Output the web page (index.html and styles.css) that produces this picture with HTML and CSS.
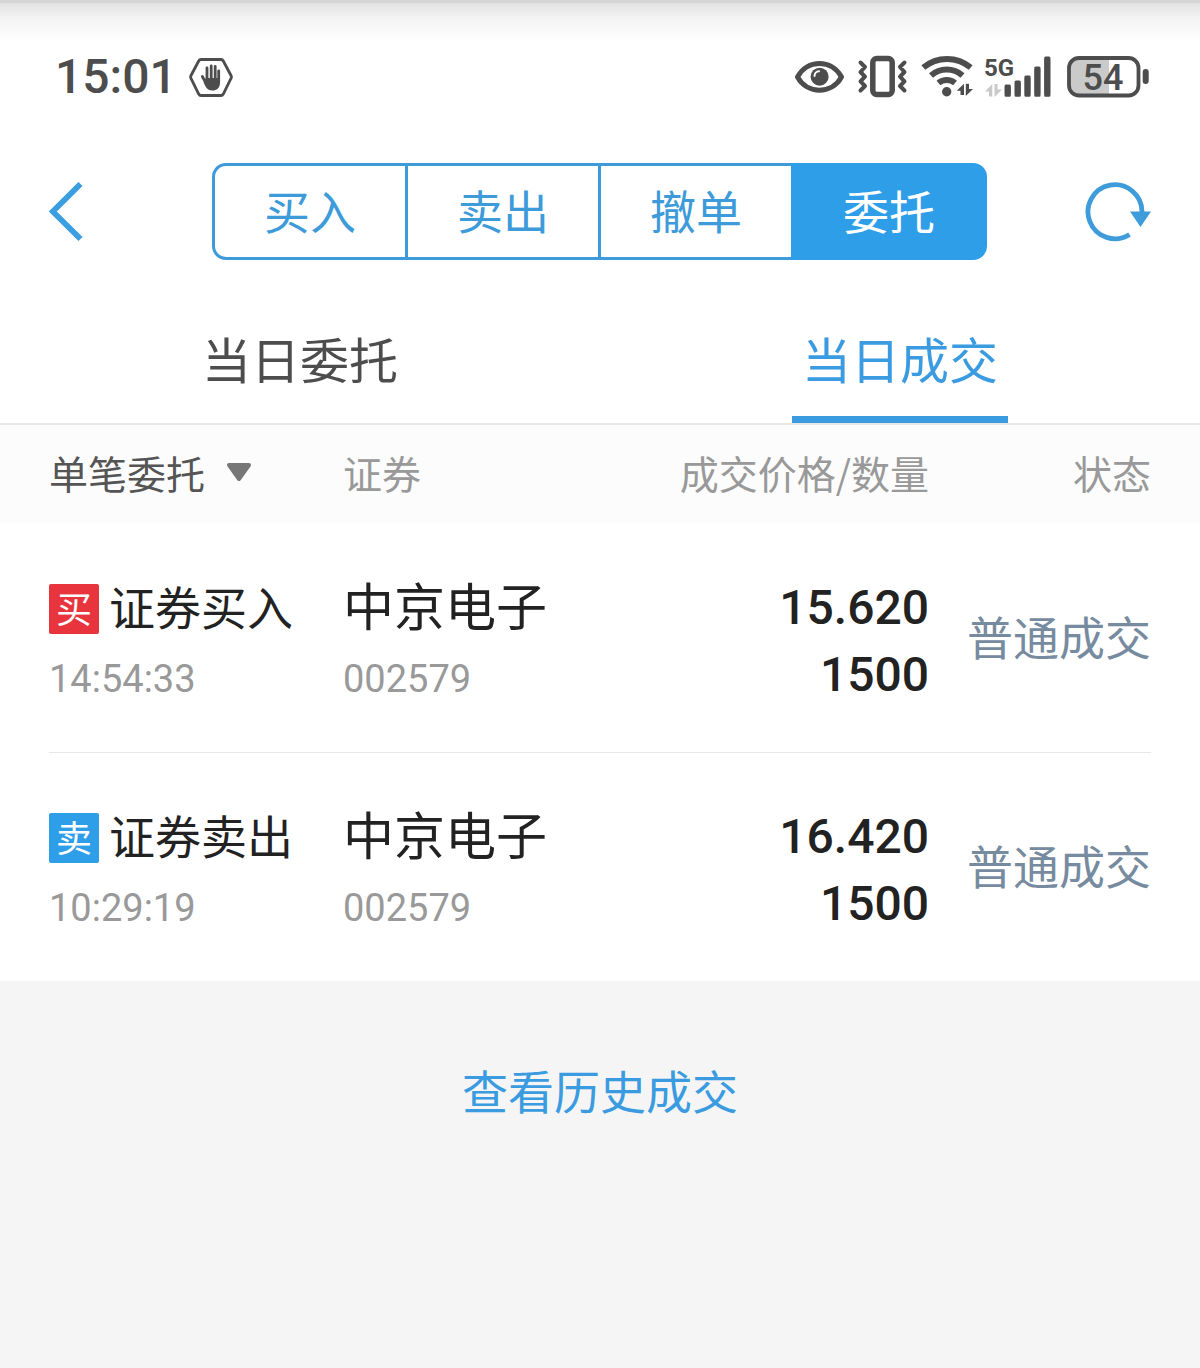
FILE: index.html
```html
<!DOCTYPE html>
<html lang="zh-CN">
<head>
    <meta charset="UTF-8">
    <meta name="viewport" content="width=device-width, initial-scale=1.0">
    <title>当日成交</title>
    <link rel="stylesheet" href="styles.css">
</head>
<body>
    <!-- 状态栏 -->
    <div class="status-bar">
        <div class="status-left">
            <span class="clock">15:01</span>
            <svg width="44" height="44" viewBox="0 0 44 44">
                <path d="M12 4.500H32Q33.500 4.500 34.300 6L42 20.500Q42.800 22 42 23.500L34.300 39Q33.500 40.500 32 40.500H12Q10.500 40.500 9.700 39L2 23.500Q1.200 22 2 20.500L9.700 6Q10.500 4.500 12 4.500Z" fill="none" stroke="#4d4d4d" stroke-width="2.800"/>
                <path d="M18 13V25M22.200 11V25M26.200 11.500V25M29.700 16V27M13.300 21.500L17 28" fill="none" stroke="#4d4d4d" stroke-width="2.800" stroke-linecap="round"/>
                <path d="M16.700 23H31V28C31 33 27.500 35.500 23.500 35.500C18.500 35.500 16.500 32 14.500 27L16.700 27Z" fill="#4d4d4d"/>
            </svg>
        </div>
        <div class="status-right">
            <svg width="50" height="44" viewBox="0 0 50 44">
                <path d="M2.500 22C12 4 37 4 46.500 22C37 39.500 12 39.500 2.500 22Z" fill="none" stroke="#4d4d4d" stroke-width="5" stroke-linejoin="round"/>
                <circle cx="24.600" cy="21.700" r="9" fill="#4d4d4d"/>
                <path d="M19.500 21C19.500 18.500 21.500 16.500 24 16.300" fill="none" stroke="#fff" stroke-width="2" stroke-linecap="round"/>
            </svg>
            <svg width="52" height="44" viewBox="0 0 52 44">
                <rect x="15.800" y="3.500" width="19.400" height="36" rx="4" fill="none" stroke="#4d4d4d" stroke-width="5.500"/>
                <path d="M3.500 7.500L8 12L3.500 17L8 21.700L3.500 26.400L8 31L3.500 35.500M47.500 7.500L43 12L47.500 17L43 21.700L47.500 26.400L43 31L47.500 35.500" fill="none" stroke="#4d4d4d" stroke-width="4" stroke-linecap="round" stroke-linejoin="round"/>
            </svg>
            <svg width="52" height="44" viewBox="0 0 52 44">
                <path d="M2.300 12.500A37 37 0 0 1 49.700 12.500M10 20.500A24 24 0 0 1 41.500 20.500M17.500 28A13 13 0 0 1 34 28" fill="none" stroke="#4d4d4d" stroke-width="6"/>
                <circle cx="25.700" cy="36.800" r="4.700" fill="#4d4d4d"/>
                <path d="M43 28.700V40H39.500V35.800H35.700ZM44.800 41V28.700H48V34H52Z" fill="#4d4d4d"/>
            </svg>
            <svg width="70" height="44" viewBox="0 0 70 44">
                <text class="net-label" x="-1" y="21">5G</text>
                <path d="M7.300 29V41.500H4V36.500H0ZM9.500 42V29H12.500V34.500H17Z" fill="#c9c9c9"/>
                <path d="M22.700 32V39.500M32.700 28V39.500M42.500 23V39.500M52.400 14V39.500M62.300 4V39.500" stroke="#4d4d4d" stroke-width="6.400" stroke-linecap="butt"/>
                <path d="M21 31H24.400M31 27H34.400M40.800 22H44.200M50.700 13H54.100M60.600 3H64M21 40.300H24.400M31 40.300H34.400M40.800 40.300H44.200M50.700 40.300H54.100M60.600 40.300H64" stroke="#4d4d4d" stroke-width="3" stroke-linecap="round"/>
            </svg>
            <svg width="83" height="44" viewBox="0 0 83 44">
                <path d="M12 3H42V40H12Q2 40 2 30V13Q2 3 12 3Z" fill="#cacaca"/>
                <rect x="2" y="3" width="69.500" height="37.500" rx="10" fill="none" stroke="#4d4d4d" stroke-width="3.800"/>
                <rect x="75.700" y="14" width="6" height="15" rx="3" fill="#4d4d4d"/>
                <text class="battery-label" x="36" y="35" text-anchor="middle">54</text>
            </svg>
        </div>
    </div>

    <!-- 顶部导航 -->
    <div class="nav">
        <button class="icon-btn" aria-label="返回">
            <svg width="34" height="60" viewBox="0 0 34 60">
                <path d="M31.500 2L3.800 29.500L31.500 57" fill="none" stroke="#3a9ee0" stroke-width="5.800"/>
            </svg>
        </button>
        <div class="segment">
            <button>买入</button>
            <button>卖出</button>
            <button>撤单</button>
            <button class="active">委托</button>
        </div>
        <button class="icon-btn refresh" aria-label="刷新">
            <svg width="66" height="60" viewBox="0 0 66 60">
                <path d="M57 30A27 27 0 1 0 44.500 52.500" fill="none" stroke="#3f9cda" stroke-width="4.800"/>
                <path d="M45 29.500H66L55.500 45Z" fill="#3f9cda"/>
            </svg>
        </button>
    </div>

    <div class="tabs">
        <button>当日委托</button>
        <button class="active">当日成交</button>
    </div>

    <!-- 成交列表 -->
    <table class="deals">
        <thead>
            <tr>
                <th class="col-type">
                    <div class="filter">
                        <select aria-label="委托类型">
                            <option>单笔委托</option>
                        </select>
                        <svg width="26" height="20" viewBox="0 0 26 20">
                            <path d="M3 3H23L13 17Z" fill="#777" stroke="#777" stroke-width="4" stroke-linejoin="round"/>
                        </svg>
                    </div>
                </th>
                <th class="col-stock">证券</th>
                <th class="col-price">成交价格/数量</th>
                <th class="col-state">状态</th>
            </tr>
        </thead>
        <tbody>
            <tr>
                <td class="col-type">
                    <div class="type"><span class="badge buy">买</span>证券买入</div>
                    <div class="sub">14:54:33</div>
                </td>
                <td class="col-stock">
                    <div class="name">中京电子</div>
                    <div class="sub">002579</div>
                </td>
                <td class="col-price">
                    <div>15.620</div>
                    <div>1500</div>
                </td>
                <td class="col-state">普通成交</td>
            </tr>
            <tr>
                <td class="col-type">
                    <div class="type"><span class="badge sell">卖</span>证券卖出</div>
                    <div class="sub">10:29:19</div>
                </td>
                <td class="col-stock">
                    <div class="name">中京电子</div>
                    <div class="sub">002579</div>
                </td>
                <td class="col-price">
                    <div>16.420</div>
                    <div>1500</div>
                </td>
                <td class="col-state">普通成交</td>
            </tr>
        </tbody>
    </table>

    <div class="footer">
        <a href="#history">查看历史成交</a>
    </div>
</body>
</html>
```
FILE: styles.css
```css
* {
    margin: 0;
    padding: 0;
    box-sizing: border-box;
}
body {
    font-family: Roboto, 'Noto Sans CJK SC', sans-serif;
    display: flex;
    flex-direction: column;
    min-height: 100vh;
    background-color: #fff;
    color: #222;
}
svg {
    display: block;
    flex: none;
}
button, select {
    font-family: 'Noto Sans CJK SC', sans-serif;
    border: none;
    background: none;
    cursor: pointer;
}
.status-bar {
    display: flex;
    align-items: center;
    justify-content: space-between;
    padding: 42px 50px 30px 55px;
    color: #4d4d4d;
    /* 顶部阴影 */
    background: linear-gradient(#d5d5d5 3px, #e2e2e2 3px, #f3f3f3 18px, #fff 42px);
}
.status-left, .status-right {
    display: flex;
    align-items: center;
    gap: 12px;
}
.clock {
    font-size: 48px;
    font-weight: 500;
    line-height: 70px;
}
.net-label {
    font-size: 24px;
    font-weight: 700;
    fill: #4d4d4d;
}
.battery-label {
    font-size: 36px;
    font-weight: 500;
    fill: #4d4d4d;
}
.nav {
    display: grid;
    grid-template-columns: 163fr 775fr 164fr;
    align-items: center;
    padding: 21px 49px 0;
}
.icon-btn {
    justify-self: start;
}
.refresh {
    justify-self: end;
}
.segment {
    display: flex;
}
.segment button {
    flex: 1;
    height: 97px;
    padding-bottom: 5px;
    border: 3px solid #3d9bda;
    font-size: 46px;
    color: #3d9bda;
}
.segment button + button {
    margin-left: -3px;
}
.segment button:first-child {
    border-radius: 14px 0 0 14px;
}
.segment button:last-child {
    border-radius: 0 14px 14px 0;
}
.segment .active {
    background-color: #2f9ee9;
    border-color: #2f9ee9;
    color: #fff;
}
.tabs {
    display: flex;
    margin-top: 35px;
    border-bottom: 2px solid #e8e8e8;
}
.tabs button {
    flex: 1;
    height: 128px;
    padding-bottom: 4px;
    font-size: 49px;
    color: #4d4d4d;
    background: no-repeat center bottom / 36% 7px;
}
.tabs .active {
    color: #3a9be0;
    background-image: linear-gradient(#3a9be0, #3a9be0);
}
.deals {
    width: 100%;
    border-collapse: collapse;
    table-layout: fixed;
}
.deals th {
    height: 98px;
    padding-bottom: 4px;
    background-color: #fcfcfc;
    color: #999;
    font-size: 39px;
    font-weight: 400;
    font-family: 'Noto Sans CJK SC', sans-serif;
    white-space: nowrap;
}
.deals td {
    padding-top: 51px;
    padding-bottom: 38px;
    vertical-align: top;
}
.deals tbody tr + tr {
    background: linear-gradient(#e8e8e8, #e8e8e8) no-repeat center top / calc(100% - 98px) 1px;
}
.deals .col-type {
    width: 343px;
    padding-left: 49px;
    text-align: left;
}
.deals .col-stock {
    text-align: left;
}
.deals .col-price {
    text-align: right;
}
.deals .col-state {
    width: 271px;
    padding-right: 49px;
    text-align: right;
}
.filter {
    display: flex;
    align-items: center;
    gap: 20px;
}
.filter select {
    appearance: none;
    font-size: 39px;
    color: #555;
}
.type {
    display: flex;
    align-items: center;
    gap: 10px;
    font-size: 46px;
    line-height: 70px;
    white-space: nowrap;
}
.badge {
    width: 50px;
    height: 50px;
    border-radius: 2px;
    color: #fff;
    font-size: 36px;
    line-height: 54px;
    text-align: center;
}
.buy {
    background-color: #e8343d;
}
.sell {
    background-color: #2f9ee9;
}
.name {
    font-size: 51px;
    line-height: 70px;
}
.sub {
    font-size: 38px;
    line-height: 70px;
    color: #999;
}
td.col-price {
    font-size: 48px;
    font-weight: 500;
    line-height: 67px;
}
td.col-state {
    font-size: 46px;
    line-height: 130px;
    color: #778ba0;
    white-space: nowrap;
}
.footer {
    flex: 1;
    padding-top: 77px;
    background-color: #f5f5f5;
    text-align: center;
}
.footer a {
    font-size: 46px;
    line-height: 70px;
    color: #3a9be0;
    text-decoration: none;
}
```
